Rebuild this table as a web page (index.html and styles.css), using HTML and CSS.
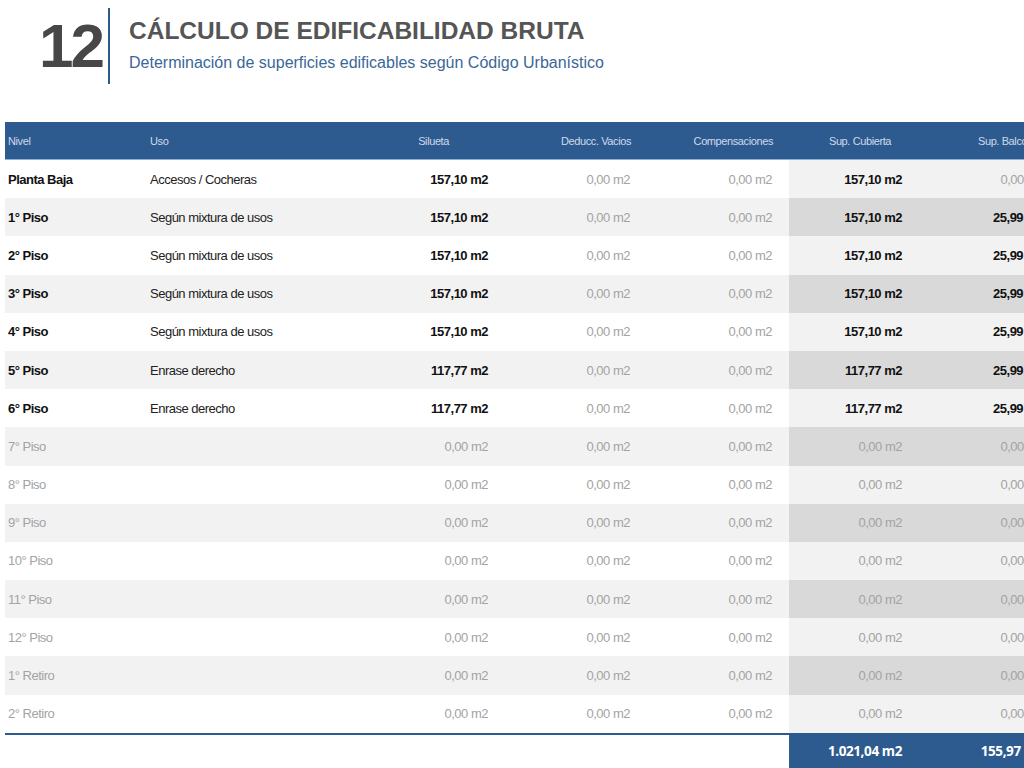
FILE: index.html
```html
<!DOCTYPE html>
<html lang="es">
<head>
<meta charset="utf-8">
<title>Cálculo de edificabilidad bruta</title>
<link rel="stylesheet" href="styles.css">
</head>
<body>
<div class="page">
  <header class="head">
    <div class="num">12</div>
    <div class="bar"></div>
    <div class="titles">
      <h1 class="title">CÁLCULO DE EDIFICABILIDAD BRUTA</h1>
      <p class="subtitle">Determinación de superficies edificables según Código Urbanístico</p>
    </div>
  </header>
  <table class="grid">
    <colgroup>
      <col class="c-nivel"><col class="c-uso"><col class="c-num"><col class="c-num"><col class="c-num"><col class="c-num"><col class="c-num">
    </colgroup>
    <thead>
      <tr>
        <th class="h-nivel">Nivel</th>
        <th class="h-uso">Uso</th>
        <th class="h-silueta">Silueta</th>
        <th class="h-right">Deducc. Vacios</th>
        <th class="h-right">Compensaciones</th>
        <th class="h-center">Sup. Cubierta</th>
        <th class="h-balc">Sup. Balcones</th>
      </tr>
    </thead>
    <tbody>
      <tr class="on"><td class="nivel">Planta Baja</td><td class="uso">Accesos / Cocheras</td><td class="val b">157,10 m2</td><td class="val g">0,00 m2</td><td class="val g">0,00 m2</td><td class="sh b">157,10 m2</td><td class="sb g">0,00 m2</td></tr>
      <tr class="on"><td class="nivel">1° Piso</td><td class="uso">Según mixtura de usos</td><td class="val b">157,10 m2</td><td class="val g">0,00 m2</td><td class="val g">0,00 m2</td><td class="sh b">157,10 m2</td><td class="sb b">25,99 m2</td></tr>
      <tr class="on"><td class="nivel">2° Piso</td><td class="uso">Según mixtura de usos</td><td class="val b">157,10 m2</td><td class="val g">0,00 m2</td><td class="val g">0,00 m2</td><td class="sh b">157,10 m2</td><td class="sb b">25,99 m2</td></tr>
      <tr class="on"><td class="nivel">3° Piso</td><td class="uso">Según mixtura de usos</td><td class="val b">157,10 m2</td><td class="val g">0,00 m2</td><td class="val g">0,00 m2</td><td class="sh b">157,10 m2</td><td class="sb b">25,99 m2</td></tr>
      <tr class="on"><td class="nivel">4° Piso</td><td class="uso">Según mixtura de usos</td><td class="val b">157,10 m2</td><td class="val g">0,00 m2</td><td class="val g">0,00 m2</td><td class="sh b">157,10 m2</td><td class="sb b">25,99 m2</td></tr>
      <tr class="on"><td class="nivel">5° Piso</td><td class="uso">Enrase derecho</td><td class="val b">117,77 m2</td><td class="val g">0,00 m2</td><td class="val g">0,00 m2</td><td class="sh b">117,77 m2</td><td class="sb b">25,99 m2</td></tr>
      <tr class="on"><td class="nivel">6° Piso</td><td class="uso">Enrase derecho</td><td class="val b">117,77 m2</td><td class="val g">0,00 m2</td><td class="val g">0,00 m2</td><td class="sh b">117,77 m2</td><td class="sb b">25,99 m2</td></tr>
      <tr class="off"><td class="nivel">7° Piso</td><td class="uso"></td><td class="val g">0,00 m2</td><td class="val g">0,00 m2</td><td class="val g">0,00 m2</td><td class="sh g">0,00 m2</td><td class="sb g">0,00 m2</td></tr>
      <tr class="off"><td class="nivel">8° Piso</td><td class="uso"></td><td class="val g">0,00 m2</td><td class="val g">0,00 m2</td><td class="val g">0,00 m2</td><td class="sh g">0,00 m2</td><td class="sb g">0,00 m2</td></tr>
      <tr class="off"><td class="nivel">9° Piso</td><td class="uso"></td><td class="val g">0,00 m2</td><td class="val g">0,00 m2</td><td class="val g">0,00 m2</td><td class="sh g">0,00 m2</td><td class="sb g">0,00 m2</td></tr>
      <tr class="off"><td class="nivel">10° Piso</td><td class="uso"></td><td class="val g">0,00 m2</td><td class="val g">0,00 m2</td><td class="val g">0,00 m2</td><td class="sh g">0,00 m2</td><td class="sb g">0,00 m2</td></tr>
      <tr class="off"><td class="nivel">11° Piso</td><td class="uso"></td><td class="val g">0,00 m2</td><td class="val g">0,00 m2</td><td class="val g">0,00 m2</td><td class="sh g">0,00 m2</td><td class="sb g">0,00 m2</td></tr>
      <tr class="off"><td class="nivel">12° Piso</td><td class="uso"></td><td class="val g">0,00 m2</td><td class="val g">0,00 m2</td><td class="val g">0,00 m2</td><td class="sh g">0,00 m2</td><td class="sb g">0,00 m2</td></tr>
      <tr class="off"><td class="nivel">1° Retiro</td><td class="uso"></td><td class="val g">0,00 m2</td><td class="val g">0,00 m2</td><td class="val g">0,00 m2</td><td class="sh g">0,00 m2</td><td class="sb g">0,00 m2</td></tr>
      <tr class="off"><td class="nivel">2° Retiro</td><td class="uso"></td><td class="val g">0,00 m2</td><td class="val g">0,00 m2</td><td class="val g">0,00 m2</td><td class="sh g">0,00 m2</td><td class="sb g">0,00 m2</td></tr>
    </tbody>
    <tfoot>
      <tr>
        <td></td><td></td><td></td><td></td><td></td>
        <td class="tot">1.021,04 m2</td>
        <td class="tot">155,97 m2</td>
      </tr>
    </tfoot>
  </table>
</div>
</body>
</html>
```
FILE: styles.css
```css
html, body {
  margin: 0;
  padding: 0;
  background: #ffffff;
}
body {
  font-family: "Liberation Sans", Arial, sans-serif;
  overflow: hidden;
  width: 1024px;
  height: 768px;
}
.page {
  padding-left: 5px;
}
.head {
  display: flex;
  align-items: flex-start;
  height: 114px;
  padding: 8px 0 0 34px;
  box-sizing: content-box;
}
.num {
  font-size: 62px;
  font-weight: bold;
  color: #474747;
  letter-spacing: -3px;
  line-height: 76px;
  width: 69px;
}
.bar {
  width: 2px;
  height: 76px;
  background: #2e5b8f;
}
.titles {
  padding-left: 19px;
  padding-top: 9px;
}
.title {
  margin: 0;
  font-size: 24.5px;
  line-height: 28px;
  font-weight: bold;
  color: #555555;
}
.subtitle {
  margin: 8px 0 0;
  font-size: 16px;
  line-height: 20px;
  color: #3b6796;
}
.grid {
  border-collapse: collapse;
  table-layout: fixed;
  width: 1068px;
}
.c-nivel { width: 140px; }
.c-uso { width: 218px; }
.c-num { width: 142px; }
.grid th {
  background: #2e5b8f;
  color: #cfdaea;
  font-weight: normal;
  font-size: 11px;
  letter-spacing: -0.4px;
  height: 37px;
  padding: 0;
  border-bottom: 1px solid #8cb2da;
  white-space: nowrap;
}
.grid th.h-nivel { text-align: left; padding-left: 3px; }
.grid th.h-uso { text-align: left; padding-left: 5px; }
.grid th.h-silueta { text-align: right; padding-right: 56px; }
.grid th.h-right { text-align: right; padding-right: 16px; }
.grid th.h-center { text-align: center; }
.grid th.h-balc { text-align: left; padding-left: 47px; }
.grid td {
  font-size: 13px;
  letter-spacing: -0.5px;
  height: 38.2px;
  padding: 0;
  white-space: nowrap;
  color: #222222;
}
.grid tbody tr:nth-child(even) td { background: #f2f2f2; }
.grid tbody tr:nth-child(odd) td.sh,
.grid tbody tr:nth-child(odd) td.sb { background: #f2f2f2; }
.grid tbody tr:nth-child(even) td.sh,
.grid tbody tr:nth-child(even) td.sb { background: #d9d9d9; }
.grid td.nivel { padding-left: 3px; }
.grid td.uso { padding-left: 5px; }
.on .nivel { font-weight: bold; color: #111111; }
.off .nivel { color: #a3a3a3; }
.grid td.val { text-align: right; padding-right: 17px; }
.grid td.sh { text-align: right; padding-right: 29px; }
.grid td.sb { text-align: right; padding-right: 29px; }
.grid td.b { font-weight: bold; color: #111111; }
.grid td.g { color: #a3a3a3; }
.grid tfoot td {
  border-top: 2px solid #2e5b8f;
  height: 33px;
  padding-bottom: 2px;
}
.grid tfoot td.tot {
  background: #2e5b8f;
  color: #ffffff;
  font-family: "Open Sans", "Liberation Sans", sans-serif;
  font-size: 13.5px;
  font-weight: bold;
  letter-spacing: -0.4px;
  text-align: right;
  padding-right: 29px;
}
```
